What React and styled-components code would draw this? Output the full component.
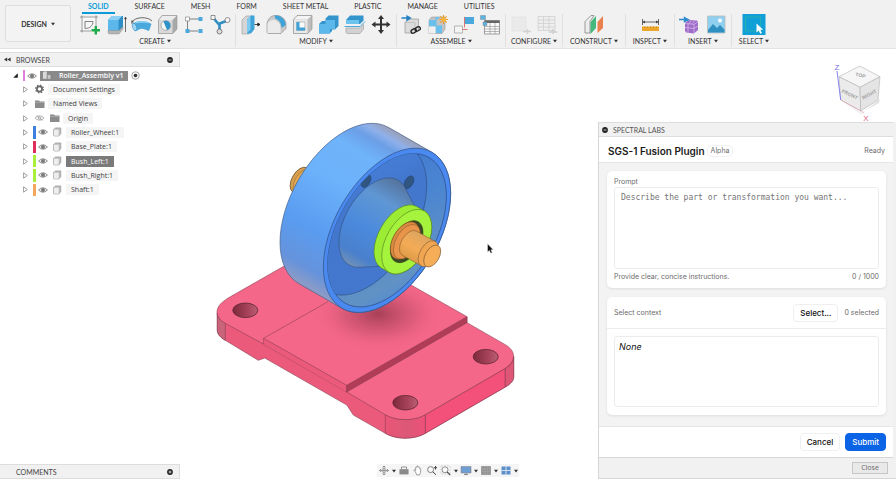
import React, { useState } from "react";
import styled, { createGlobalStyle } from "styled-components";

const GlobalStyle = createGlobalStyle`
  * {
    box-sizing: border-box;
  }

  body {
    margin: 0;
    background: #ffffff;
    font-family: "Open Sans", sans-serif;
    font-size: 7px;
    color: #3c3c3c;
  }

  button {
    margin: 0;
    padding: 0;
    border: 0;
    background: none;
    font: inherit;
    color: inherit;
  }

  svg {
    display: block;
    flex: none;
  }
`;

/* ---------- layout ---------- */

const Page = styled.div`
  display: flex;
  flex-direction: column;
  min-height: 100vh;
`;

const Workspace = styled.main`
  flex: 1;
  display: grid;
  grid-template-columns: 180px 1fr 298px;
  grid-template-rows: 1fr auto;
`;

const Sidebar = styled.aside`
  grid-column: 1;
  grid-row: 1 / 3;
  display: flex;
  flex-direction: column;
  justify-content: space-between;
  padding: 3px 0 1px;
`;

const RightColumn = styled.aside`
  grid-column: 3;
  grid-row: 1 / 3;
  display: flex;
  flex-direction: column;
  padding-bottom: 1px;
`;

/* ---------- toolbar ---------- */

const Toolbar = styled.header`
  display: flex;
  height: 49px;
  background: #f1f1f1;
  border-bottom: 1px solid #e2e2e2;
  font-family: Lato, sans-serif;
  font-size: 7px;
  line-height: 10px;
  color: #333333;
`;

const DesignButton = styled.button`
  display: flex;
  align-items: center;
  justify-content: center;
  gap: 4px;
  width: 66px;
  height: 37px;
  margin: 5px 4px 0 5px;
  border: 1px solid #dedede;
  border-radius: 2px;
  background: #f3f3f3;
  font-weight: 700;
`;

const ToolbarBody = styled.div`
  display: flex;
  flex-direction: column;
`;

const Tabs = styled.nav`
  display: flex;
  height: 14px;
`;

const Tab = styled.button`
  height: 14px;
  margin: 0 7px;
  padding: 1px 6px;
  border-bottom: 2px solid ${(p) => (p.$active ? "#0a9bd8" : "transparent")};
  font-weight: ${(p) => (p.$active ? 700 : 400)};
  line-height: 10px;
  color: ${(p) => (p.$active ? "#0a9bd8" : "#333333")};
`;

const Groups = styled.div`
  display: flex;
`;

const Group = styled.div`
  display: flex;
  flex-direction: column;
  align-items: center;
  gap: 1px;
  height: 33px;
  padding: 0 ${(p) => (p.$wide ? 7 : 3)}px;
  border-right: 1px solid ${(p) => (p.$last ? "transparent" : "#e0e0e0")};
`;

const IconRow = styled.div`
  display: flex;
  gap: 2px;
  opacity: ${(p) => (p.$disabled ? 0.5 : 1)};
`;

const GroupLabel = styled.button`
  display: flex;
  align-items: center;
  gap: 2px;
`;

/* ---------- browser tree ---------- */

const PaneHeader = styled.div`
  display: flex;
  align-items: center;
  gap: 5px;
  height: 15px;
  padding: 0 6px 0 4px;
  background: #f1f1f1;
  border: solid #dddddd;
  border-width: 1px 1px 1px 0;
  font-family: Lato, sans-serif;
  font-size: 7px;
  line-height: 10px;
  color: #444444;

  span {
    flex: 1;
  }
`;

const CommentsHeader = styled(PaneHeader)`
  padding-left: 16px;
`;

const Tree = styled.ul`
  display: grid;
  height: 128px;
  margin: 2px 0 0;
  padding: 0;
  list-style: none;
`;

const TreeRow = styled.li`
  display: flex;
  align-items: center;
  gap: 2px;
  padding-left: ${(p) => (p.$root ? 10 : 20)}px;
`;

const Toggle = styled.button`
  display: flex;
  justify-content: center;
  width: 11px;
`;

const ColorBar = styled.i`
  align-self: stretch;
  width: ${(p) => (p.$thin ? 2 : 3)}px;
  margin: 1px 0;
  background: ${(p) => p.$color};
`;

const TreeLabel = styled.span`
  padding: 0 5px;
  line-height: 11px;
  background: ${(p) => (p.$selected ? "#7a7a7a" : "#f5f5f5")};
  color: ${(p) => (p.$selected ? "#ffffff" : "#3c3c3c")};
`;

const RootLabel = styled.span`
  display: flex;
  align-items: center;
  gap: 7px;
  padding: 0 5px 0 2px;
  margin: 0 1px;
  background: #8a8a8a;
  line-height: 10px;
  font-weight: 600;
  color: #ffffff;
`;

/* ---------- canvas ---------- */

const Scene = styled.svg`
  grid-column: 2;
  grid-row: 1;
  width: 100%;
  height: 100%;
`;

const NavBar = styled.div`
  grid-column: 1 / -1;
  grid-row: 2;
  justify-self: center;
  display: flex;
  align-items: center;
  gap: 2px;
  height: 13px;
  margin-bottom: 3px;
  padding: 0 1px;
  background: #f5f5f5;
`;

const NavButton = styled.button`
  display: flex;
  align-items: center;
  gap: 2px;
`;

const CubeArea = styled.div`
  display: flex;
  justify-content: flex-end;
  height: 73px;
  padding: 10px 8px 0 0;
`;

/* ---------- plugin panel ---------- */

const Panel = styled.section`
  flex: 1;
  display: flex;
  flex-direction: column;
  border: solid #d6d6d6;
  border-width: 0 0 1px 1px;
  padding-right: 3px;
  background: #f1f1f1;
  font-family: Inter, sans-serif;
  font-size: 7px;
  line-height: 10px;
  color: #6b6b6b;
`;

const PanelHeader = styled.div`
  display: flex;
  align-items: center;
  gap: 5px;
  height: 15px;
  padding: 0 3px;
  border: solid #dddddd;
  border-width: 1px 0;
  font-family: Lato, sans-serif;
  color: #555555;
`;

const TitleBar = styled.div`
  display: flex;
  align-items: center;
  height: 26px;
  padding: 2px 8px 0 9px;
  border-bottom: 1px solid #e6e6e6;
  background: #ffffff;

  h1 {
    margin: 0;
    font-size: 10px;
    font-weight: 600;
    line-height: 14px;
    color: #1a1a1a;
  }
`;

const Badge = styled.span`
  margin-left: 2px;
  padding: 0 3px;
  border: 1px solid #f2f2f2;
  border-radius: 4px;
`;

const Status = styled.span`
  margin-left: auto;
`;

const PanelBody = styled.div`
  flex: 1;
  display: flex;
  flex-direction: column;
  gap: 9px;
  padding: 8px 7px 0 8px;
  background: #f3f3f4;
`;

const Card = styled.div`
  border-radius: 5px;
  background: #ffffff;
  box-shadow: 0 1px 3px rgba(0, 0, 0, 0.09);
`;

const PromptCard = styled(Card)`
  display: flex;
  flex-direction: column;
  padding: 6px 7px;
`;

const PromptInput = styled.textarea`
  height: 82px;
  margin: 0 0 3px;
  padding: 5px 6px;
  border: 1px solid #ececec;
  border-radius: 3px;
  outline: none;
  resize: none;
  background: #ffffff;
  font-family: "DejaVu Sans Mono", monospace;
  font-size: 8px;
  line-height: 10px;
  color: #333333;

  &::placeholder {
    color: #757575;
    opacity: 1;
  }
`;

const Hint = styled.div`
  display: flex;
  justify-content: space-between;
`;

const ContextHead = styled.div`
  display: flex;
  align-items: center;
  gap: 6px;
  height: 32px;
  padding: 0 7px;
  border-bottom: 1px solid #ececec;

  label {
    flex: 1;
  }
`;

const ContextBox = styled.div`
  height: 71px;
  margin: 7px 7px 8px;
  padding: 4px;
  border: 1px solid #ececec;
  border-radius: 3px;
  font-size: 9px;
  font-style: italic;
  line-height: 12px;
  color: #111111;
`;

const Button = styled.button`
  height: 18px;
  padding: 0 6px;
  border: 1px solid ${(p) => (p.$primary ? "#0b63e5" : "#efefef")};
  border-radius: 4px;
  background: ${(p) => (p.$primary ? "#0b63e5" : "#ffffff")};
  font-size: 8px;
  font-weight: 500;
  color: ${(p) => (p.$primary ? "#ffffff" : "#111111")};
`;

const Actions = styled.div`
  display: flex;
  align-items: center;
  justify-content: flex-end;
  gap: 5px;
  height: 31px;
  padding-right: 7px;
  border-top: 1px solid #e6e6e6;
  background: #ffffff;
`;

const CloseBar = styled.div`
  display: flex;
  align-items: center;
  justify-content: flex-end;
  height: 21px;
  padding-right: 5px;
  border-top: 1px solid #d6d6d6;
`;

const CloseButton = styled.button`
  width: 36px;
  height: 12px;
  border: 1px solid #c6c6c6;
  background: #e9e9e9;
  font-family: "Open Sans", sans-serif;
  font-size: 7px;
  line-height: 10px;
  color: #666666;
`;

/* ---------- small icons ---------- */

const Caret = () => (
  <svg width="4" height="4" viewBox="0 0 4 4">
    <path d="M0 .8h4L2 3.6z" fill="#333" />
  </svg>
);

const Dot = ({ plus }) => (
  <svg width="6" height="6" viewBox="0 0 6 6">
    <circle cx="3" cy="3" r="2.9" fill="#222" />
    <path d={plus ? "M1.6 3h2.8M3 1.6v2.8" : "M1.6 3h2.8"} stroke="#ddd" strokeWidth=".9" />
  </svg>
);

const Rewind = () => (
  <svg width="7" height="5" viewBox="0 0 7 5">
    <path d="M3.2.5v4L0 2.5zM6.6.5v4L3.4 2.5z" fill="#333" />
  </svg>
);

const Eye = ({ width = 10, off }) => (
  <svg width={width} height="8" viewBox="0 0 10 8">
    <path d="M.6 4C2.6 1.2 7.4 1.2 9.4 4 7.4 6.8 2.6 6.8.6 4z" fill={off ? "none" : "#e4e4e4"} stroke="#7c7c7c" strokeWidth={off ? 0.6 : 0.9} />
    <circle cx="5" cy="4" r={off ? 1.3 : 1.7} fill={off ? "none" : "#777"} stroke="#777" strokeWidth=".5" />
    {off && <path d="M2 1.5l6 5" stroke="#888" strokeWidth=".6" />}
  </svg>
);

const Gear = () => (
  <svg width="13" height="10" viewBox="0 0 13 10">
    <circle cx="6.5" cy="5" r="2.6" fill="none" stroke="#666" strokeWidth="1.7" />
    <circle cx="6.5" cy="5" r="3.9" fill="none" stroke="#666" strokeWidth="1.2" strokeDasharray="1.5 1.56" />
  </svg>
);

const Folder = () => (
  <svg width="13" height="10" viewBox="0 0 13 10">
    <path d="M2 1.5h4l1 1h4.5v6.5H2z" fill="#8b8b8b" />
    <path d="M2 3.4h9.5" stroke="#bcbcbc" strokeWidth=".6" />
  </svg>
);

const Body = () => (
  <svg width="14" height="10" viewBox="0 0 14 10">
    <path d="M3.5 2.6L5.6.9h5.2v5.6L8.9 9H4.2l-.7-.8z" fill="#bdbdbd" stroke="#8d8d8d" strokeWidth=".6" />
    <path d="M3.8 2.8h4.9v5.9H4.2l-.4-.6z" fill="#eeeeee" />
  </svg>
);

const AssemblyMark = () => (
  <svg width="10" height="9" viewBox="0 0 10 9">
    <path d="M1 1.5L2.2.5h2.6v7.3H1z" fill="#dadada" />
    <path d="M5.3 3.6h3.6v4.6H5.3z" fill="#c9c9c9" stroke="#777" strokeWidth=".5" />
  </svg>
);

const Target = () => (
  <svg width="9" height="9" viewBox="0 0 9 9">
    <circle cx="4.5" cy="4.5" r="3.8" fill="#f4f4f4" stroke="#8a8a8a" strokeWidth=".7" />
    <circle cx="4.5" cy="4.5" r="1.8" fill="#333" />
  </svg>
);

/* ---------- toolbar icons ---------- */

const icons = {
  sketch: (
    <>
      <path d="M4 3h14v14H4z" fill="#f6f6f6" />
      <path d="M2 3h18M4 1.500v17M18 1.500v11M2 17h11" stroke="#666" strokeWidth=".6" />
      <path d="M7 14.500V7.500h8c0 4-3 7-8 7z" fill="none" stroke="#666" strokeWidth=".8" />
      <path d="M17.800 12v8.500M13.500 16.300H22" stroke="#1faa4b" strokeWidth="2.400" />
    </>
  ),
  extrude: (
    <>
      <path d="M4 6l4-4h11v12l-4 5H5l-1-1z" fill="#2f8fc6" />
      <path d="M4 6h10.500v11H4z" fill="#5cb8ea" />
      <path d="M4 6l4-4h10l-3.500 4z" fill="#8bd0f2" />
      <path d="M4 16.500h11l4-4V15l-4 5H5l-1-1z" fill="#b5b5b5" stroke="#888" strokeWidth=".4" />
      <path d="M21.500 18V4M20.700 5l.8-2 .8 2z" stroke="#333" strokeWidth=".7" fill="#333" />
    </>
  ),
  revolve: (
    <>
      <path d="M2 8C5 3 17 2 22 7" fill="none" stroke="#444" strokeWidth=".8" />
      <path d="M2.500 10c4-4 14-4 19 0l-2.500 7-4-1.500c-2-1-4-1-6 0L5.500 17.500z" fill="#4aa8dc" />
      <path d="M4 9.500c4-3.500 12-3.500 16.500 0-4-1-12-1-16.500 0z" fill="#8fd3f5" />
      <ellipse cx="4.500" cy="13" rx="2" ry="3.800" transform="rotate(-20 4.500 13)" fill="#9fd6f3" stroke="#2b86bd" strokeWidth=".5" />
      <path d="M2 6v4M1 8h3" stroke="#444" strokeWidth=".7" />
    </>
  ),
  hole: (
    <>
      <path d="M2.500 6L6 1.500h15V15l-4 4.500H2.500z" fill="#a9a9a9" stroke="#888" strokeWidth=".5" />
      <path d="M3 6h13.500v13H3z" fill="#d9d9d9" />
      <path d="M3 6l3.200-4H20.500l-4 4z" fill="#ececec" />
      <circle cx="9.800" cy="11.500" r="4.800" fill="#f5f5f5" stroke="#777" strokeWidth=".5" />
      <path d="M7.500 7.500a4.600 4.600 0 0 1 7 4.500 4.600 4.600 0 0 1-3.500 4z" fill="#2f93c9" />
    </>
  ),
  pattern: (
    <>
      <path d="M18 5H5.500v12H16" fill="none" stroke="#666" strokeWidth=".8" />
      <path d="M3.500 3h4v4h-4z" fill="#fff" stroke="#777" strokeWidth=".6" />
      <path d="M16.500 3h4v4h-4zM3.500 15h4v4h-4zM16.500 15h4v4h-4z" fill="#4aa8dc" />
    </>
  ),
  form: (
    <>
      <path d="M5 3.500l5.500 6.500 9-3.500M11.500 10v7" fill="none" stroke="#2f8fc4" strokeWidth="2.600" />
      <path d="M3 1.500h4v4H3z" fill="#f7f7f7" stroke="#666" strokeWidth=".7" />
      <circle cx="19.500" cy="6" r="2.500" fill="#f7f7f7" stroke="#666" strokeWidth=".7" />
      <circle cx="11.500" cy="17.500" r="2.500" fill="#ddd" stroke="#666" strokeWidth=".8" />
    </>
  ),
  pressPull: (
    <>
      <path d="M3 6l4-4h7l-4 4v14H3z" fill="#d6d6d6" stroke="#888" strokeWidth=".5" />
      <path d="M8 5.500L12 1.500h3.500v13.500L12 19.500H8z" fill="#3fa3d8" />
      <path d="M8 5.500L11.500 2v13.500L8 19z" fill="#7fcaf0" />
      <path d="M15.500 10.500h4M18.800 9l2.200 1.500-2.200 1.500z" fill="#222" stroke="#222" strokeWidth=".8" />
    </>
  ),
  fillet: (
    <>
      <path d="M2 18.500V9c1-4 4-7.500 8-7.500h3c5 1 8 5 8 9v4l-5 5H3z" fill="#c9c9c9" stroke="#888" strokeWidth=".6" />
      <path d="M2.500 18.500V9.500c2-3 4-4 6.500-3.500 4 .5 6.500 4 6.500 8v5h-13z" fill="#ebebeb" />
      <path d="M9.500 1.600c6-1 11.300 4 11.300 9.400l-4.300 3c0-4.500-2.500-8.500-6-9z" fill="#3fa3d8" />
    </>
  ),
  shell: (
    <>
      <path d="M2.500 5.500L6 1.500h15V15l-4 4.500H2.500z" fill="#bcbcbc" stroke="#8a8a8a" strokeWidth=".6" />
      <path d="M3 5.500l3.400-3.600h13.800l-3.700 3.600z" fill="#f4f4f4" />
      <path d="M3 5.500h13.500v13.500H3z" fill="#e9e9e9" />
      <path d="M5.500 8h8.500v8.500H5.500z" fill="#fafafa" stroke="#888" strokeWidth=".5" />
      <path d="M5.500 8h3v5.500H14v3H5.500z" fill="#3fa3d8" />
    </>
  ),
  combine: (
    <>
      <path d="M8.500 4.500l3-3h10V12l-3.500 3.500h-3V17l-2.500 2.500H2V10l3-3h3.500z" fill="#3495cc" />
      <path d="M2 10h6.500V6H18v9h-5v4.500H2z" fill="#5cb8ea" />
    </>
  ),
  split: (
    <>
      <path d="M3 6l4-4.500h13.500v5L17 10H3z" fill="#3495cc" />
      <path d="M3 6h13v4H3z" fill="#6cc3ee" />
      <path d="M1.500 12.500h15.500l5-5" stroke="#4aa8dc" strokeWidth="1" fill="none" />
      <path d="M3 14h14l3.500-3.500V15L17 19.500H4L3 18.500z" fill="#d2d2d2" stroke="#999" strokeWidth=".6" />
    </>
  ),
  move: (
    <path d="M12 1l3 4h-2v4.500h4.500v-2l4 3-4 3v-2H13V16h2l-3 4-3-4h2v-4.500H6.500v2l-4-3 4-3v2H11V5H9z" fill="#333" />
  ),
  component: (
    <>
      <path d="M5 8.500L8 5h10.500v11l-3 3H5z" fill="#dcdcdc" stroke="#888" strokeWidth=".6" />
      <path d="M5 8.500h10v10" fill="none" stroke="#aaa" strokeWidth=".5" />
      <path d="M1.500 4H8M7 2l3.500 2L7 6.300z" fill="#2480c3" stroke="#2480c3" strokeWidth="1.300" />
      <g fill="none" stroke="#222" strokeWidth="1.300">
        <rect x="11" y="15" width="5.500" height="3.600" rx="1.800" transform="rotate(-30 14 17)" />
        <rect x="15" y="13" width="5.500" height="3.600" rx="1.800" transform="rotate(-30 18 15)" />
      </g>
    </>
  ),
  newComponent: (
    <>
      <path d="M3 6l2.500-3H19v12l-3 4.500H3z" fill="#c4c4c4" stroke="#888" strokeWidth=".5" />
      <path d="M3 6h6.500v6.500H3zM9.500 3h4.500l-3.500 3v5.500H16V19H9.500z" fill="#6bbfec" />
      <path d="M3 12.500h6.500v7H3z" fill="#f0f0f0" />
      <path d="M17.500 1v9M13 5.500h9M14.300 2.300l6.400 6.400M20.700 2.300l-6.400 6.400" stroke="#eda12d" strokeWidth="1.200" />
      <circle cx="17.500" cy="5.500" r="2.200" fill="#f7b53c" />
    </>
  ),
  joint: (
    <>
      <path d="M2.500 12h8v7h-8z" fill="#f4f4f4" stroke="#999" strokeWidth=".7" />
      <path d="M13 3h9v7h-9z" fill="#4aa8dc" />
      <path d="M12.500 3v10.500M10.500 15.500h5" fill="none" stroke="#d9534f" strokeWidth=".8" />
    </>
  ),
  table: (
    <>
      <path d="M6.500 6.500h15V20h-15z" fill="#fafafa" stroke="#777" strokeWidth=".7" />
      <path d="M6.500 6.500h15v2.500h-15z" fill="#666" />
      <path d="M6.500 12.500h15M6.500 15h15M6.500 17.500h15M12 9v11M17 9v11" stroke="#999" strokeWidth=".7" />
      <path d="M2.500 1.500h5v4h-5zM5 8h4v3.500H5z" fill="#5ab4e3" stroke="#777" strokeWidth=".4" />
    </>
  ),
  configA: (
    <>
      <path d="M3 3h14v14H3z" fill="#e4e4e4" stroke="#d0d0d0" strokeWidth=".6" />
      <path d="M14 17.500h8M18.500 15v5" stroke="#b5b5b5" strokeWidth="1.300" />
    </>
  ),
  configB: (
    <>
      <path d="M3 2.500h17v14H3z" fill="#ededed" stroke="#aaa" strokeWidth=".7" />
      <path d="M3 6h17M3 9.500h17M3 13h17M8.500 3v13M14 3v13" stroke="#aaa" strokeWidth=".7" />
      <path d="M14 18h8M18 15v5" stroke="#aaa" strokeWidth="1.300" />
    </>
  ),
  plane: (
    <>
      <path d="M3 7.500L9 1.500h3l-4 6V19H3z" fill="#ededed" stroke="#777" strokeWidth=".7" />
      <path d="M8.500 8L14 2v12l-5.500 6z" fill="#45b87e" />
      <path d="M15.500 8L21 2v12l-5.500 5z" fill="#e9814f" />
    </>
  ),
  measure: (
    <>
      <path d="M4.500 5v6M20.500 5v6M4.500 8h16" stroke="#444" strokeWidth=".8" />
      <path d="M7 6.500L4.500 8 7 9.500zM18 6.500L20.500 8 18 9.500z" fill="#444" />
      <path d="M4 12.500h17v4.500H4z" fill="#eda62c" />
      <path d="M6.500 12.500v1.500M9.500 12.500v1.500M12.500 12.500v1.500M15.500 12.500v1.500M18.500 12.500v1.500" stroke="#b97a1c" strokeWidth=".6" />
    </>
  ),
  insertMesh: (
    <>
      <path d="M7 9l4-3 8 .5 1 2V16l-4 3.500-8-1-1-2z" fill="#a06cc9" />
      <path d="M7 9.500l9 .8 4-2.500M16 10.300V19M10 9.600v9M7 13.500l9 1 4-2.500M13 6.500l-2 3.500M17 6.500l-3 3" fill="none" stroke="#e2cdf3" strokeWidth=".6" />
      <path d="M1 5.500h6M6.500 3.500l4 2.200-4 2z" fill="#2f8ccc" stroke="#2f8ccc" strokeWidth="1.400" />
    </>
  ),
  canvas: (
    <>
      <path d="M3.500 2h17.500v17H3.500z" fill="#8fd0ee" stroke="#bbb" strokeWidth=".8" />
      <path d="M4 16l5-6 4 4 3-3 4.500 4.500V18.500H4z" fill="#2f8fc0" />
      <circle cx="16" cy="6.500" r="2" fill="#fdfdfd" />
    </>
  ),
  select: (
    <>
      <path d="M.5 0h23v21H.5z" fill="#109fd6" />
      <path d="M3.500 3h15v14h-15z" fill="none" stroke="#2fb5a5" strokeWidth=".7" />
      <path d="M14.500 9.500v9l2.200-2 1.500 3.200 1.700-.8-1.500-3.100h2.800z" fill="#fff" />
    </>
  ),
};

const ToolIcon = ({ name }) => (
  <svg width="24" height="21" viewBox="0 0 24 21">
    {icons[name]}
  </svg>
);

const tabs = ["SOLID", "SURFACE", "MESH", "FORM", "SHEET METAL", "PLASTIC", "MANAGE", "UTILITIES"];

const groups = [
  { label: "CREATE", tools: ["sketch", "extrude", "revolve", "hole", "pattern", "form"] },
  { label: "MODIFY", tools: ["pressPull", "fillet", "shell", "combine", "split", "move"] },
  { label: "ASSEMBLE", tools: ["component", "newComponent", "joint", "table"] },
  { label: "CONFIGURE", tools: ["configA", "configB"], disabled: true },
  { label: "CONSTRUCT", tools: ["plane"], wide: true },
  { label: "INSPECT", tools: ["measure"], wide: true },
  { label: "INSERT", tools: ["insertMesh", "canvas"] },
  { label: "SELECT", tools: ["select"], wide: true, last: true },
];

const parts = [
  { name: "Roller_Wheel:1", color: "#3f7fe0" },
  { name: "Base_Plate:1", color: "#e02c5c" },
  { name: "Bush_Left:1", color: "#a6f03c", selected: true },
  { name: "Bush_Right:1", color: "#a6f03c" },
  { name: "Shaft:1", color: "#f2a75c" },
];

const Expand = () => (
  <Toggle aria-label="Expand">
    <svg width="5" height="7" viewBox="0 0 5 7">
      <path d="M.6.8L4.300 3.500.6 6.200z" fill="#fff" stroke="#777" strokeWidth=".7" />
    </svg>
  </Toggle>
);

const BrowserTree = () => (
  <Tree>
    <TreeRow $root>
      <Toggle aria-label="Collapse">
        <svg width="5" height="5" viewBox="0 0 5 5">
          <path d="M4.800.3v4.500H.2z" fill="#222" />
        </svg>
      </Toggle>
      <ColorBar $thin $color="#e07fd8" />
      <Eye />
      <RootLabel>
        <AssemblyMark />
        Roller_Assembly v1
      </RootLabel>
      <Target />
    </TreeRow>
    <TreeRow>
      <Expand />
      <Gear />
      <TreeLabel>Document Settings</TreeLabel>
    </TreeRow>
    <TreeRow>
      <Expand />
      <Folder />
      <TreeLabel>Named Views</TreeLabel>
    </TreeRow>
    <TreeRow>
      <Expand />
      <Eye width={13} off />
      <Folder />
      <TreeLabel>Origin</TreeLabel>
    </TreeRow>
    {parts.map((part) => (
      <TreeRow key={part.name}>
        <Expand />
        <ColorBar $color={part.color} />
        <Eye />
        <Body />
        <TreeLabel $selected={part.selected}>{part.name}</TreeLabel>
      </TreeRow>
    ))}
  </Tree>
);

/* ---------- model ---------- */

// a circle seen along the shaft axis in the isometric view
const Disc = ({ x, y, r, ...rest }) => (
  <ellipse cx={x} cy={y} rx={r} ry={r * 0.577} transform={`rotate(-60 ${x} ${y})`} {...rest} />
);

const Model = () => (
  <Scene viewBox="180 49 418 415" role="img" aria-label="Roller assembly">
    <defs>
      <linearGradient id="wheel" gradientUnits="userSpaceOnUse" x1="320" y1="296" x2="410" y2="140">
        <stop offset="0" stopColor="#8f9cc4" />
        <stop offset=".1" stopColor="#6593dc" />
        <stop offset=".3" stopColor="#5a9cf0" />
        <stop offset=".6" stopColor="#6cb2fb" />
        <stop offset=".8" stopColor="#6fb4fa" />
        <stop offset=".9" stopColor="#6b9fe6" />
        <stop offset=".95" stopColor="#8fb0ea" />
        <stop offset="1" stopColor="#9aa0b8" />
      </linearGradient>
      <linearGradient id="bore" gradientUnits="userSpaceOnUse" x1="345" y1="300" x2="430" y2="160">
        <stop offset="0" stopColor="#4787dc" />
        <stop offset=".2" stopColor="#6292c4" />
        <stop offset=".6" stopColor="#4a85d2" />
        <stop offset="1" stopColor="#3f74cc" />
      </linearGradient>
      <linearGradient id="face" gradientUnits="userSpaceOnUse" x1="340" y1="290" x2="420" y2="160">
        <stop offset="0" stopColor="#4478cf" />
        <stop offset=".6" stopColor="#4277cd" />
        <stop offset="1" stopColor="#4c86df" />
      </linearGradient>
      <linearGradient id="hub" gradientUnits="userSpaceOnUse" x1="360" y1="270" x2="408" y2="187">
        <stop offset="0" stopColor="#6d8fb8" />
        <stop offset=".12" stopColor="#4a80cc" />
        <stop offset=".4" stopColor="#4b89dc" />
        <stop offset=".75" stopColor="#5f97d4" />
        <stop offset="1" stopColor="#56749f" />
      </linearGradient>
      <linearGradient id="shaft" gradientUnits="userSpaceOnUse" x1="412" y1="262" x2="426" y2="236">
        <stop offset="0" stopColor="#dc9a48" />
        <stop offset=".45" stopColor="#f4ab56" />
        <stop offset="1" stopColor="#dca560" />
      </linearGradient>
      <linearGradient id="corner" x1="0" x2="1" y1="0" y2="0">
        <stop offset="0" stopColor="#ea5576" />
        <stop offset=".55" stopColor="#dc5877" />
        <stop offset="1" stopColor="#ee5079" />
      </linearGradient>
      <linearGradient id="hole" x1="0" x2="1" y1="0" y2="0">
        <stop offset="0" stopColor="#7d2a3b" />
        <stop offset=".6" stopColor="#a64259" />
        <stop offset="1" stopColor="#bb6075" />
      </linearGradient>
      <radialGradient id="shade">
        <stop offset="0" stopColor="#8e3347" stopOpacity=".75" />
        <stop offset=".5" stopColor="#b04560" stopOpacity=".4" />
        <stop offset="1" stopColor="#f06284" stopOpacity="0" />
      </radialGradient>
      <clipPath id="boreClip">
        <ellipse cx="387" cy="230.300" rx="84" ry="48.500" transform="rotate(-60 387 230.300)" />
      </clipPath>
      <clipPath id="faceClip">
        <ellipse cx="368" cy="219.300" rx="83" ry="47.900" transform="rotate(-60 368 219.300)" />
      </clipPath>
      <clipPath id="topClip">
        <path d="M264 338.300L328 302 411 285 467 316.700 346.700 385.300z" />
      </clipPath>
    </defs>

    {/* base plate */}
    <g strokeLinejoin="round" stroke="#8c4054" strokeWidth=".6">
      <path
        d="M217.300 313v17c0 4 3 7.500 8 10.300l33 20 6.500-2.300 82 47 6.500 10 32 18.300c11 6.500 29 6.500 40 0l80-46.300c5.500-3.300 8.400-6.300 8.400-10.300v-20z"
        fill="#ec5a7b"
      />
      <path d="M425.300 414.700l80-46.400v18.700l-80 46.300z" fill="#f4517a" />
      <path d="M385.300 414.700c11 6.500 29 6.500 40 0v18.600c-11 6.500-29 6.500-40 0z" fill="url(#corner)" />
      <path d="M505.300 368.300c6-3.300 8.400-7.600 8.400-11.600v20c0 4-2.900 7-8.400 10.300z" fill="#dd5676" />
      <path d="M217.300 313c0 4 3 7.500 8 10.300v17c-5-2.800-8-6.300-8-10.300z" fill="#c9647a" />
      <path
        d="M225.300 323.300c-11-6.500-11-16 0-23.300 2-1.500 4-2.600 5-3.200L300 257l111 28 56 31.700v6l38.300 22c11 6.500 11 16 0 23.600l-80 46.400c-11 6.500-29 6.500-40 0L346.700 392 263.300 344z"
        fill="#f56788"
      />
      <path d="M263.600 344v-5.700L346.700 385.300V392z" fill="#ec5a7b" stroke="none" />
      <path d="M263.600 344v-5.700L346.700 385.300V392M263.600 338.300L328 301.700" fill="none" />
      <path d="M346.700 385.300L467 316.700v6L346.700 392z" fill="#b03c57" />
    </g>
    <ellipse cx="378" cy="314" rx="66" ry="37" fill="url(#shade)" clipPath="url(#topClip)" />
    {[
      [245.3, 310.3],
      [485.7, 356.7],
      [405.3, 402.7],
    ].map(([x, y]) => (
      <ellipse key={x} cx={x} cy={y} rx="12.500" ry="7.300" fill="url(#hole)" stroke="#5c2433" strokeWidth=".8" />
    ))}

    {/* far end of the shaft */}
    <Disc x={300} y={180} r={14} fill="#dba04c" stroke="#5e4a2c" strokeWidth=".7" />
    <path d="M307 168l20 12-14 24-20-12z" fill="#d9983f" />
    <Disc x={303} y={181.8} r={14} fill="#e5a853" stroke="#8a6a3a" strokeWidth=".5" />

    {/* roller wheel */}
    <path
      d="M388.700 127.500L432 152.300A90 52 -60 0 1 342 308.300L298.700 283.500A90 52 -60 0 1 388.700 127.500z"
      fill="url(#wheel)"
      stroke="#44608c"
      strokeWidth=".7"
    />
    <Disc x={387} y={230.3} r={90} fill="#4a8af0" stroke="#35568f" strokeWidth=".7" />
    <Disc x={387} y={230.3} r={84} fill="url(#bore)" stroke="#2f4f8a" strokeWidth=".7" />
    <g clipPath="url(#boreClip)">
      <Disc x={368} y={219.3} r={83} fill="url(#face)" stroke="#2f4f84" strokeWidth=".6" />
      <g clipPath="url(#faceClip)" fill="#2f5580" stroke="#264268" strokeWidth=".5">
        <Disc x={409} y={182.3} r={7} />
        <Disc x={366} y={181} r={7} />
      </g>
    </g>
    <path
      d="M405.100 187.800L418.600 213.900 388.600 265.900 359.200 267.300A49 28.300 -60 1 1 405.100 187.800z"
      fill="url(#hub)"
      stroke="#31507f"
      strokeWidth=".6"
    />

    {/* bushing */}
    <path
      d="M416.700 206.500L424.400 211A35.400 20.400 -60 0 1 389 272.400L381.300 267.900A35.400 20.400 -60 0 1 416.700 206.500z"
      fill="#9cec33"
      stroke="#4d7a1e"
      strokeWidth=".6"
    />
    <Disc x={406.7} y={241.7} r={35.4} fill="#a6f33d" stroke="#568723" strokeWidth=".6" />
    <Disc x={406.7} y={241.7} r={23} fill="#3a4a24" stroke="#33421f" strokeWidth=".6" />
    <Disc x={404.8} y={240.5} r={20.5} fill="#d98c40" stroke="#6e4320" strokeWidth=".6" />
    <Disc x={406.8} y={241.7} r={19} fill="#e8944a" stroke="#8a5426" strokeWidth=".5" />

    {/* near end of the shaft */}
    <path
      d="M416 230.900L435 241.400A14 8.100 -60 0 1 421 265.600L402 255.100A14 8.100 -60 0 1 416 230.900z"
      fill="url(#shaft)"
      stroke="#8a5c28"
      strokeWidth=".6"
    />
    <Disc x={428} y={253.5} r={14} fill="#f0a552" stroke="#8a6232" strokeWidth=".6" />
    <path d="M435 241.400l3.200 4.200-12 20.800-5.200-.8z" fill="#f0a552" />
    <Disc x={432.2} y={256} r={12} fill="#f5ad58" stroke="#75502a" strokeWidth=".6" />

    {/* mouse pointer */}
    <path d="M487.500 243.800v8.200l1.900-1.600 1.300 2.900 1.500-.7-1.300-2.800h2.400z" fill="#111" stroke="#fff" strokeWidth=".4" />
  </Scene>
);

const ViewCube = () => (
  <svg width="56" height="63" viewBox="832 59 56 63" role="img" aria-label="View cube">
    <path d="M842 101l19 12 18-10 1-4-19 15z" fill="#e2e2e2" />
    <g stroke="#b2b2b2" strokeWidth=".6" strokeLinejoin="round">
      <path d="M859.700 66L880 76.700 860 87.300 839 76.700z" fill="#f6f6f6" />
      <path d="M839 76.700L860 87.300l.7 23.700-20-11z" fill="#ebebeb" />
      <path d="M880 76.700L860 87.300l.7 23.700L878 100z" fill="#e4e4e4" />
    </g>
    <g fill="#a2a2a2" fontFamily="Liberation Sans, sans-serif" fontSize="5" fontWeight="700" textAnchor="middle">
      <text x="860" y="77" transform="rotate(14 860 77)">TOP</text>
      <text x="849" y="96" transform="rotate(26 849 96)">FRONT</text>
      <text x="870" y="96" transform="rotate(-28 870 96)">RIGHT</text>
    </g>
    <path d="M837 71l3.700 29" stroke="#7a76f0" strokeWidth=".9" />
    <path d="M841 100l20 11 3 2" stroke="#e7a3b0" strokeWidth=".7" fill="none" />
    <g fontFamily="Liberation Sans, sans-serif" fontSize="8" textAnchor="middle">
      <text x="837" y="70" fill="#7a6ee0">Z</text>
      <text x="866" y="121" fill="#d8607c">X</text>
    </g>
  </svg>
);

/* ---------- navigation bar ---------- */

const NavIcon = ({ children }) => (
  <svg width="12" height="11" viewBox="0 0 12 11">
    {children}
  </svg>
);

const Navigation = () => (
  <NavBar>
    <NavButton aria-label="Orbit">
      <NavIcon>
        <path d="M6 1v9M1.500 5.500h9M4.500 2.500L6 1l1.500 1.500M4.500 8.500L6 10l1.500-1.500M3 4L1.500 5.500 3 7M9 4l1.500 1.500L9 7" fill="none" stroke="#777" strokeWidth=".7" />
        <ellipse cx="6" cy="5.500" rx="2.200" ry="2" fill="none" stroke="#888" strokeWidth=".6" />
      </NavIcon>
      <Caret />
    </NavButton>
    <NavButton aria-label="Look at">
      <NavIcon>
        <path d="M1.500 4h9v5.500h-9z" fill="#9a9a9a" />
        <path d="M3.500 4V2h5v2M1.500 6h9M1.500 8h9" fill="none" stroke="#6f6f6f" strokeWidth=".7" />
      </NavIcon>
    </NavButton>
    <NavButton aria-label="Pan">
      <NavIcon>
        <path d="M3.500 7L1.800 5.200c.6-.8 1.400-.2 1.900.4V2.200c.6-.8 1.100-.3 1.200.2l.2-1.200c.6-.6 1.200-.2 1.200.5l.1.500c.6-.5 1.200-.1 1.200.6v.8c.7-.4 1.200 0 1.100.8 0 2.200-.2 3.400-1.200 5.400H4.700z" fill="#fff" stroke="#777" strokeWidth=".7" />
      </NavIcon>
    </NavButton>
    <NavButton aria-label="Zoom">
      <NavIcon>
        <circle cx="4.600" cy="4.600" r="3" fill="#fafafa" stroke="#666" strokeWidth=".8" />
        <path d="M6.800 6.800l3.200 3M9.500 1v3.500M8 2.700h3" stroke="#444" strokeWidth="1" />
      </NavIcon>
    </NavButton>
    <NavButton aria-label="Fit">
      <NavIcon>
        <circle cx="5" cy="4.800" r="3" fill="#fafafa" stroke="#777" strokeWidth=".8" />
        <path d="M7.200 7l3 3" stroke="#444" strokeWidth="1.100" />
        <path d="M1 1h9v8H1z" fill="none" stroke="#aaa" strokeWidth=".5" strokeDasharray="1.500 1.500" />
      </NavIcon>
      <Caret />
    </NavButton>
    <NavButton aria-label="Display settings">
      <NavIcon>
        <path d="M1 1.500h10v6.500H1z" fill="#6e9fd4" stroke="#888" strokeWidth=".6" />
        <path d="M4 9.500h4M6 8v1.500" stroke="#888" />
      </NavIcon>
      <Caret />
    </NavButton>
    <NavButton aria-label="Grid and snaps">
      <NavIcon>
        <path d="M1.500 1.500h9v8h-9z" fill="#959595" stroke="#808080" strokeWidth=".6" />
        <path d="M1.500 4h9M1.500 6.500h9M4.500 1.500v8M7.500 1.500v8" stroke="#a5a5a5" strokeWidth=".5" />
      </NavIcon>
      <Caret />
    </NavButton>
    <NavButton aria-label="Viewports">
      <NavIcon>
        <path d="M1.500 1.500h9v8h-9z" fill="#5c8fc9" />
        <path d="M6 1.500v8M1.500 5.500h9" stroke="#dfe9f5" strokeWidth=".9" />
      </NavIcon>
      <Caret />
    </NavButton>
  </NavBar>
);

/* ---------- plugin ---------- */

const PluginPanel = () => {
  const [prompt, setPrompt] = useState("");

  return (
    <Panel>
      <PanelHeader>
        <Dot />
        SPECTRAL LABS
      </PanelHeader>
      <TitleBar>
        <h1>SGS-1 Fusion Plugin</h1>
        <Badge>Alpha</Badge>
        <Status>Ready</Status>
      </TitleBar>
      <PanelBody>
        <PromptCard>
          <label htmlFor="prompt">Prompt</label>
          <PromptInput
            id="prompt"
            maxLength={1000}
            placeholder="Describe the part or transformation you want..."
            value={prompt}
            onChange={(e) => setPrompt(e.target.value)}
          />
          <Hint>
            <span>Provide clear, concise instructions.</span>
            <span>{prompt.length} / 1000</span>
          </Hint>
        </PromptCard>
        <Card>
          <ContextHead>
            <label htmlFor="pick">Select context</label>
            <Button id="pick">Select...</Button>
            <span>0 selected</span>
          </ContextHead>
          <ContextBox>None</ContextBox>
        </Card>
      </PanelBody>
      <Actions>
        <Button>Cancel</Button>
        <Button $primary>Submit</Button>
      </Actions>
      <CloseBar>
        <CloseButton>Close</CloseButton>
      </CloseBar>
    </Panel>
  );
};

const App = () => {
  const [activeTab, setActiveTab] = useState("SOLID");

  return (
    <Page>
      <GlobalStyle />
      <Toolbar>
        <DesignButton aria-haspopup="menu">
          DESIGN
          <Caret />
        </DesignButton>
        <ToolbarBody>
          <Tabs>
            {tabs.map((tab) => (
              <Tab key={tab} $active={tab === activeTab} onClick={() => setActiveTab(tab)}>
                {tab}
              </Tab>
            ))}
          </Tabs>
          <Groups>
            {groups.map((group) => (
              <Group key={group.label} $wide={group.wide} $last={group.last}>
                <IconRow $disabled={group.disabled}>
                  {group.tools.map((tool) => (
                    <ToolIcon key={tool} name={tool} />
                  ))}
                </IconRow>
                <GroupLabel aria-haspopup="menu">
                  {group.label}
                  <Caret />
                </GroupLabel>
              </Group>
            ))}
          </Groups>
        </ToolbarBody>
      </Toolbar>
      <Workspace>
        <Sidebar>
          <div>
            <PaneHeader>
              <Rewind />
              <span>BROWSER</span>
              <Dot />
            </PaneHeader>
            <BrowserTree />
          </div>
          <CommentsHeader>
            <span>COMMENTS</span>
            <Dot plus />
          </CommentsHeader>
        </Sidebar>
        <Model />
        <Navigation />
        <RightColumn>
          <CubeArea>
            <ViewCube />
          </CubeArea>
          <PluginPanel />
        </RightColumn>
      </Workspace>
    </Page>
  );
};

export default App;
